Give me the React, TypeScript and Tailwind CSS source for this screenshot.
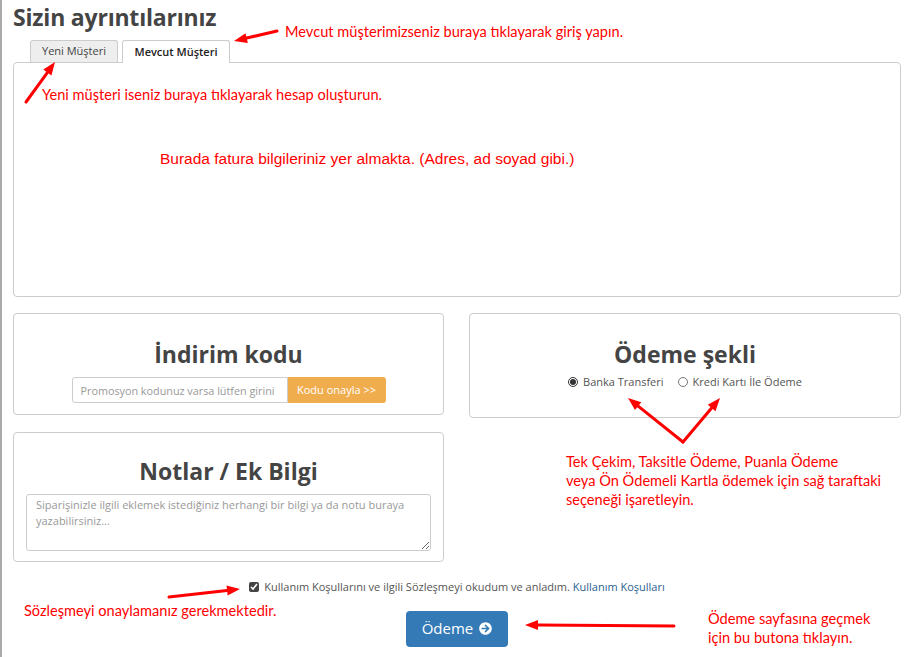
import { FaArrowCircleRight } from "react-icons/fa"

const ui = { fontFamily: '"Open Sans", "Noto Sans", sans-serif' }
const note = { fontFamily: 'Lato, "Noto Sans", sans-serif' }

function Arrow({ x1, y1, x2, y2 }: { x1: number; y1: number; x2: number; y2: number }) {
  const a = Math.atan2(y2 - y1, x2 - x1)
  const len = 13
  const w = 5
  const bx = x2 - Math.cos(a) * len
  const by = y2 - Math.sin(a) * len
  const px = -Math.sin(a) * w
  const py = Math.cos(a) * w
  return (
    <g>
      <line x1={x1} y1={y1} x2={bx} y2={by} stroke="#ff0000" strokeWidth={3} strokeLinecap="round" />
      <polygon points={`${x2},${y2} ${bx + px},${by + py} ${bx - px},${by - py}`} fill="#ff0000" />
    </g>
  )
}

function Panel({ title, className, children }: { title: string; className: string; children: React.ReactNode }) {
  return (
    <div className={`flex flex-col items-center rounded border border-[#ccc] bg-white ${className}`}>
      <h2 className="text-[23px] font-bold leading-none text-[#444]">{title}</h2>
      {children}
    </div>
  )
}

export default function App() {
  return (
    <div className="relative h-[657px] w-[906px] overflow-hidden border-l-2 border-[#aaa] bg-white pl-[11px] pr-[5px] text-[#555]" style={ui}>
      <h1 className="pt-[2px] text-[23px] font-bold leading-[30px] tracking-[-0.2px] text-[#444]">Sizin ayrıntılarınız</h1>

      <div className="ml-[17px] mt-[8px] flex gap-[4px] text-[11px]">
        <div className="flex h-[22px] w-[88px] items-center justify-center rounded-t-[3px] border border-b-0 border-[#ccc] bg-[#eee] text-[#444]">Yeni Müşteri</div>
        <div className="relative z-10 -mb-px flex h-[23px] w-[108px] items-center justify-center rounded-t-[3px] border border-b-0 border-[#ccc] bg-white font-semibold text-[#222]">Mevcut Müşteri</div>
      </div>
      <div className="h-[235px] w-[888px] rounded border border-[#ccc]" />

      <div className="mt-[16px] flex w-[888px] gap-[25px]">
        <div className="flex w-[431px] flex-col gap-[17px]">
          <Panel title="İndirim kodu" className="h-[102px] pt-[29px]">
            <div className="mt-[11px] flex h-[26px]">
              <input
                readOnly
                placeholder="Promosyon kodunuz varsa lütfen girini"
                className="h-[26px] w-[216px] rounded-l-[3px] border border-[#ccc] px-[8px] text-[10.8px] placeholder:text-[#999]"
                style={ui}
              />
              <button className="h-[26px] w-[98px] rounded-r-[3px] bg-[#f0ad4e] text-[11px] text-white">Kodu onayla &gt;&gt;</button>
            </div>
          </Panel>
          <Panel title="Notlar / Ek Bilgi" className="h-[130px] pt-[27px]">
            <textarea
              readOnly
              placeholder="Siparişinizle ilgili eklemek istediğiniz herhangi bir bilgi ya da notu buraya yazabilirsiniz..."
              className="mt-[11px] h-[57px] w-[405px] rounded-[3px] border border-[#ccc] px-[9px] py-[2px] text-[11px] leading-[16px] placeholder:text-[#999]"
              style={ui}
            />
          </Panel>
        </div>
        <Panel title="Ödeme şekli" className="h-[105px] w-[432px] pt-[29px]">
          <div className="mt-[8px] flex items-center gap-[14px] text-[11px] text-[#555]">
            <label className="flex items-center gap-[5px]">
              <input type="radio" defaultChecked name="pay" className="h-[10px] w-[10px] accent-[#333]" />
              Banka Transferi
            </label>
            <label className="flex items-center gap-[5px]">
              <input type="radio" name="pay" className="h-[10px] w-[10px]" />
              Kredi Kartı İle Ödeme
            </label>
          </div>
        </Panel>
      </div>

      <div className="mt-[17px] flex w-[888px] justify-center">
        <label className="flex items-center gap-[5px] text-[11px] text-[#555]">
          <input type="checkbox" defaultChecked className="h-[10px] w-[10px] accent-[#444]" />
          <span>
            Kullanım Koşullarını ve ilgili Sözleşmeyi okudum ve anladım. <span className="text-[#2a5f8f]">Kullanım Koşulları</span>
          </span>
        </label>
      </div>

      <div className="mt-[15px] flex w-[888px] justify-center">
        <button className="flex h-[36px] w-[102px] items-center justify-center gap-[6px] rounded-[4px] bg-[#337ab7] text-[15px] text-white">
          Ödeme <FaArrowCircleRight className="h-[13px] w-[13px]" />
        </button>
      </div>

      {/* red guide notes */}
      <div className="pointer-events-none absolute inset-0 text-[14.6px] text-[#f00]" style={note}>
        <p className="absolute left-[283px] top-[21px]">Mevcut müşterimizseniz buraya tıklayarak giriş yapın.</p>
        <p className="absolute left-[40px] top-[84px]">Yeni müşteri iseniz buraya tıklayarak hesap oluşturun.</p>
        <p className="absolute left-[158px] top-[147px] text-[15.5px]" style={{ fontFamily: '"Liberation Sans", Arial, sans-serif' }}>
          Burada fatura bilgileriniz yer almakta. (Adres, ad soyad gibi.)
        </p>
        <p className="absolute left-[564px] top-[452px] leading-[19px]">
          Tek Çekim, Taksitle Ödeme, Puanla Ödeme
          <br />
          veya Ön Ödemeli Kartla ödemek için sağ taraftaki
          <br />
          seçeneği işaretleyin.
        </p>
        <p className="absolute left-[22px] top-[600px]">Sözleşmeyi onaylamanız gerekmektedir.</p>
        <p className="absolute left-[706px] top-[609px] leading-[19px]">
          Ödeme sayfasına geçmek
          <br />
          için bu butona tıklayın.
        </p>
        <svg className="absolute inset-0" width={906} height={657}>
          <Arrow x1={275} y1={31} x2={232} y2={41} />
          <Arrow x1={24} y1={102} x2={53} y2={62} />
          <Arrow x1={681} y1={442} x2={626} y2={398} />
          <Arrow x1={681} y1={442} x2={718} y2={398} />
          <Arrow x1={167} y1={597} x2={238} y2={589} />
          <Arrow x1={672} y1={626} x2={523} y2={625} />
        </svg>
      </div>
    </div>
  )
}
